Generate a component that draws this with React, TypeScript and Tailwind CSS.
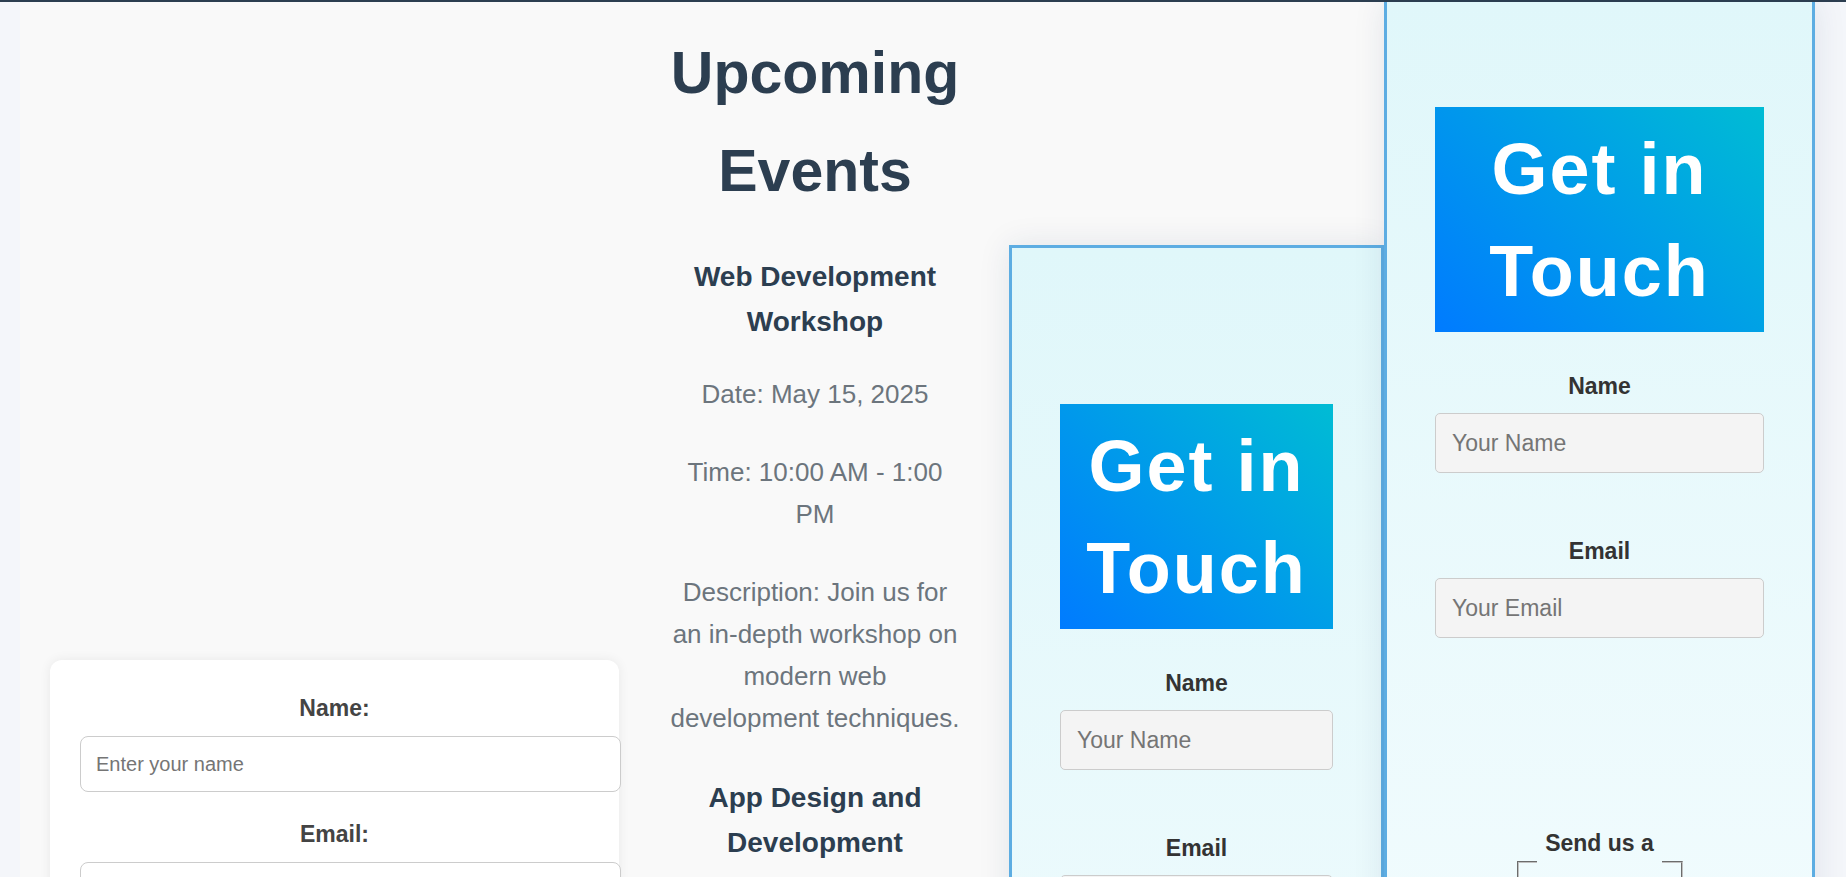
import React from "react";

const panelInput =
  "block w-full h-[60px] px-[16px] text-[23px] leading-[normal] bg-[#f4f4f4] border border-[#ccc] rounded-[5px] text-[#333] placeholder:text-[#757575] outline-none";

const cardInput =
  "block box-content w-full h-[24px] px-[15px] py-[15px] text-[20px] leading-[normal] bg-white border border-[#ccc] rounded-[8px] text-[#333] placeholder:text-[#757575] outline-none";

const panelLabel = "block mb-[8px] text-center text-[23px] leading-[37px] font-bold text-[#333]";

function ContactForm() {
  return (
    <>
      <h2 className="pt-[11px] pb-[10px] mb-[36px] text-center text-[72px] leading-[102px] font-bold tracking-[2px] text-white bg-[linear-gradient(45deg,#007bff,#00bcd4)]">
        Get in Touch
      </h2>
      <form>
        <div className="mb-[60px]">
          <label className={panelLabel}>Name</label>
          <input type="text" placeholder="Your Name" className={panelInput} />
        </div>
        <div>
          <label className={panelLabel}>Email</label>
          <input type="email" placeholder="Your Email" className={panelInput} />
        </div>
        <fieldset className="mt-[187px] mx-auto w-[166px] px-[18px] pb-[10px] border-2 [border-style:groove] border-[#c0c0c0]">
          <legend className="mx-auto w-[125px] px-[4px] text-center text-[23px] leading-[37px] font-bold text-[#333]">
            Send us a <span className="relative top-[6px]">message</span>
          </legend>
          <textarea rows={4} className="block w-full border border-[#ccc] bg-white text-[16px]" />
        </fieldset>
      </form>
    </>
  );
}

export default function App() {
  return (
    <div className="h-screen overflow-hidden bg-[#f4f6fa] font-['Liberation_Sans',Arial,sans-serif] leading-[1.6]">
      <div className="h-[2px] bg-[#2c3e50]" />
      <div className="flex pl-[20px] h-[875px]">
        <div className="flex w-[1795px] bg-[#f9f9f9]">
          {/* contact form card */}
          <div className="ml-[30px] mt-[658px] w-[569px] shrink-0 self-start">
            <form className="px-[30px] pt-[30px] pb-[30px] bg-white rounded-[12px] shadow-[0_0_12px_rgba(0,0,0,0.07)]">
              <label className="block mb-[9px] text-center text-[23px] leading-[37px] font-bold text-[#444]">Name:</label>
              <input type="text" placeholder="Enter your name" className={cardInput} />
              <label className="block mt-[24px] mb-[9px] text-center text-[23px] leading-[37px] font-bold text-[#444]">Email:</label>
              <input type="email" placeholder="Enter your email" className={cardInput} />
              <label className="block mt-[24px] mb-[9px] text-center text-[23px] leading-[37px] font-bold text-[#444]">Message:</label>
              <textarea rows={4} placeholder="Your message" className="block box-content w-full px-[15px] py-[15px] text-[20px] border border-[#ccc] rounded-[8px]" />
            </form>
          </div>

          {/* events */}
          <section className="ml-[48px] mt-[22px] w-[296px] shrink-0 self-start text-center">
            <h1 className="mb-[34px] text-[59px] leading-[98px] font-bold text-[#2c3e50]">Upcoming Events</h1>
            <div>
              <h3 className="mb-[29px] text-[28px] leading-[45px] font-bold text-[#2c3e50]">Web Development Workshop</h3>
              <p className="mb-[36px] text-[26px] leading-[42px] text-[#6c757d]">Date: May 15, 2025</p>
              <p className="mb-[36px] text-[26px] leading-[42px] text-[#6c757d]">Time: 10:00 AM - 1:00 PM</p>
              <p className="mb-[36px] text-[26px] leading-[42px] text-[#6c757d]">
                Description: Join us for an in-depth workshop on modern web development techniques.
              </p>
            </div>
            <div>
              <h3 className="mb-[29px] text-[28px] leading-[45px] font-bold text-[#2c3e50]">App Design and Development</h3>
              <p className="mb-[36px] text-[26px] leading-[42px] text-[#6c757d]">Date: June 10, 2025</p>
              <p className="mb-[36px] text-[26px] leading-[42px] text-[#6c757d]">Time: 2:00 PM - 5:00 PM</p>
            </div>
          </section>

          {/* two contact panels side by side */}
          <div className="ml-[46px] flex self-start">
            <section className="mt-[243px] w-[375px] shrink-0 self-start pt-[156px] px-[48px] pb-[48px] border-[3px] border-[#5dade2] bg-[linear-gradient(to_bottom,#e0f7fa,#f3fcfe)] shadow-[0_0_30px_rgba(30,50,90,0.1)]">
              <ContactForm />
            </section>
            <section className="w-[431px] shrink-0 self-start pt-[105px] px-[48px] pb-[48px] border-x-[3px] border-b-[3px] border-[#5dade2] bg-[linear-gradient(to_bottom,#e0f7fa,#f3fcfe)] shadow-[0_0_30px_rgba(30,50,90,0.1)]">
              <ContactForm />
            </section>
          </div>
        </div>
      </div>
    </div>
  );
}
